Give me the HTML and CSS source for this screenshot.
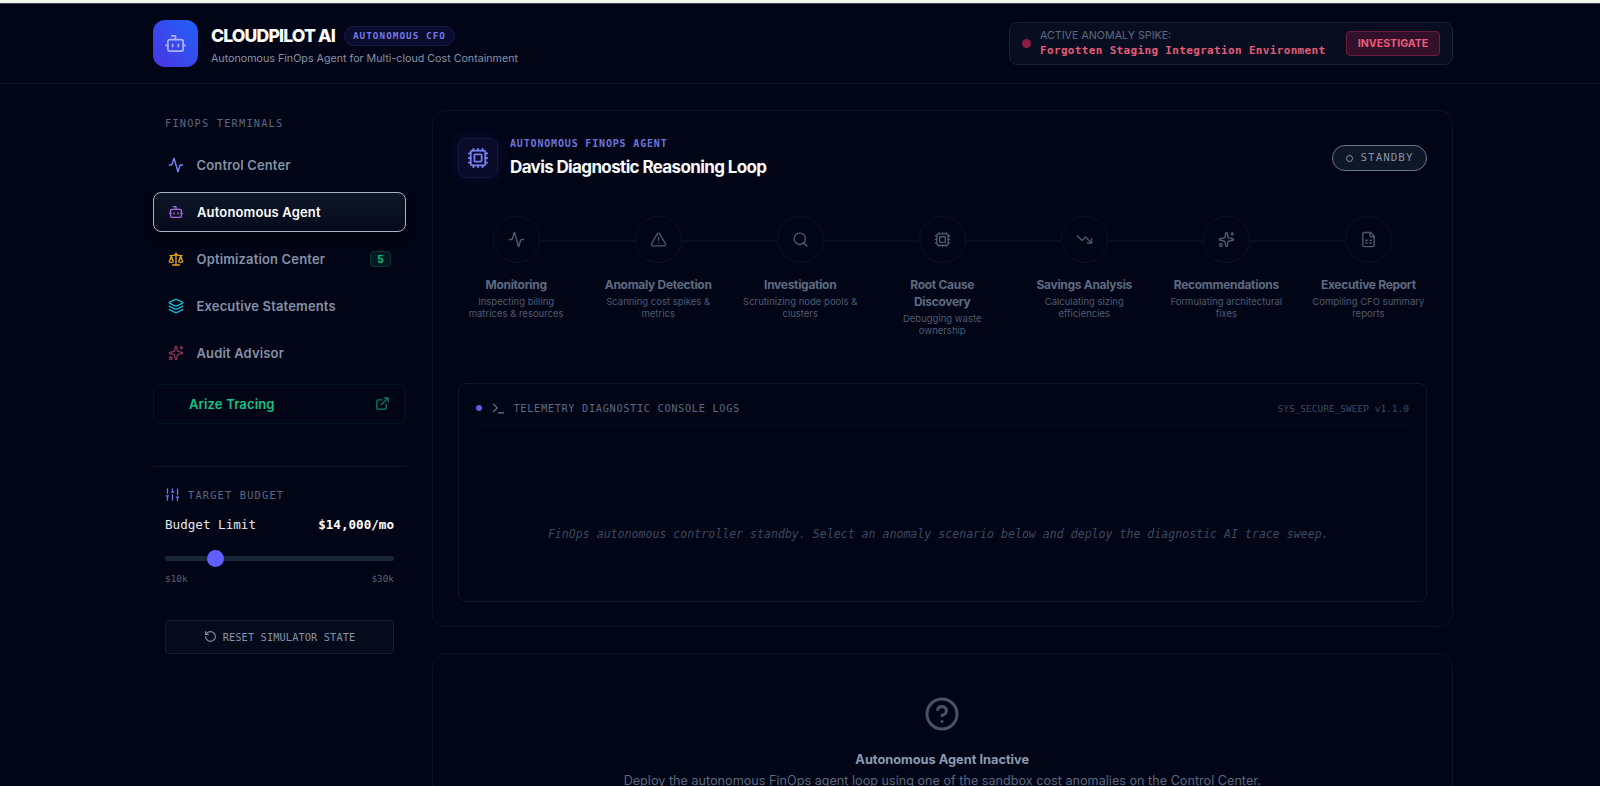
FILE: index.html
```html
<!DOCTYPE html>
<html lang="en">
<head>
    <meta charset="UTF-8">
    <meta name="viewport" content="width=device-width">
    <title>CloudPilot AI</title>
    <link rel="stylesheet" href="styles.css">
</head>

<body>
    <!-- shared icon shapes -->
    <svg class="sprite" width="0" height="0">
        <symbol id="bot" viewBox="0 0 24 24"><path d="M12 8V4H8"/><rect width="16" height="12" x="4" y="8" rx="2"/><path d="M2 14h2M20 14h2M15 13v2M9 13v2"/></symbol>
        <symbol id="activity" viewBox="0 0 24 24"><path d="M22 12h-2.48a2 2 0 0 0-1.93 1.46l-2.35 8.36a.25.25 0 0 1-.48 0L9.24 2.18a.25.25 0 0 0-.48 0l-2.35 8.36A2 2 0 0 1 4.49 12H2"/></symbol>
        <symbol id="scale" viewBox="0 0 24 24"><path d="m16 16 3-8 3 8c-.87.65-1.92 1-3 1s-2.13-.35-3-1Z"/><path d="m2 16 3-8 3 8c-.87.65-1.92 1-3 1s-2.13-.35-3-1Z"/><path d="M7 21h10M12 3v18M3 7h2c2 0 5-1 7-2 2 1 5 2 7 2h2"/></symbol>
        <symbol id="layers" viewBox="0 0 24 24"><path d="M12.83 2.18a2 2 0 0 0-1.66 0L2.6 6.08a1 1 0 0 0 0 1.83l8.58 3.91a2 2 0 0 0 1.66 0l8.58-3.9a1 1 0 0 0 0-1.83z"/><path d="M2 12a1 1 0 0 0 .58.91l8.6 3.91a2 2 0 0 0 1.65 0l8.58-3.9A1 1 0 0 0 22 12"/><path d="M2 17a1 1 0 0 0 .58.91l8.6 3.91a2 2 0 0 0 1.65 0l8.58-3.9A1 1 0 0 0 22 17"/></symbol>
        <symbol id="sparkles" viewBox="0 0 24 24"><path d="M11.017 2.814a1 1 0 0 1 1.966 0l1.051 5.558a2 2 0 0 0 1.594 1.594l5.558 1.051a1 1 0 0 1 0 1.966l-5.558 1.051a2 2 0 0 0-1.594 1.594l-1.051 5.558a1 1 0 0 1-1.966 0l-1.051-5.558a2 2 0 0 0-1.594-1.594l-5.558-1.051a1 1 0 0 1 0-1.966l5.558-1.051a2 2 0 0 0 1.594-1.594z"/><path d="M20 2v4M22 4h-4"/><circle cx="4" cy="20" r="2"/></symbol>
        <symbol id="external" viewBox="0 0 24 24"><path d="M15 3h6v6M10 14 21 3M18 13v6a2 2 0 0 1-2 2H5a2 2 0 0 1-2-2V8a2 2 0 0 1 2-2h6"/></symbol>
        <symbol id="sliders" viewBox="0 0 24 24"><path d="M4 21v-7M4 10V3M12 21v-9M12 8V3M20 21v-5M20 12V3M2 14h4M10 8h4M18 16h4"/></symbol>
        <symbol id="reset" viewBox="0 0 24 24"><path d="M3 12a9 9 0 1 0 9-9 9.75 9.75 0 0 0-6.74 2.74L3 8"/><path d="M3 3v5h5"/></symbol>
        <symbol id="cpu" viewBox="0 0 24 24"><path d="M12 20v2M12 2v2M17 20v2M17 2v2M2 12h2M2 17h2M2 7h2M20 12h2M20 17h2M20 7h2M7 20v2M7 2v2"/><rect x="4" y="4" width="16" height="16" rx="2"/><rect x="8" y="8" width="8" height="8" rx="1"/></symbol>
        <symbol id="alert" viewBox="0 0 24 24"><path d="m21.73 18-8-14a2 2 0 0 0-3.48 0l-8 14A2 2 0 0 0 4 21h16a2 2 0 0 0 1.73-3M12 9v4M12 17h.01"/></symbol>
        <symbol id="search" viewBox="0 0 24 24"><circle cx="11" cy="11" r="8"/><path d="m21 21-4.34-4.34"/></symbol>
        <symbol id="trending" viewBox="0 0 24 24"><path d="M16 17h6v-6"/><path d="m22 17-8.5-8.5-5 5L2 7"/></symbol>
        <symbol id="report" viewBox="0 0 24 24"><path d="M15 2H6a2 2 0 0 0-2 2v16a2 2 0 0 0 2 2h12a2 2 0 0 0 2-2V7Z"/><path d="M14 2v4a2 2 0 0 0 2 2h4M8 13h2M14 13h2M8 17h2M14 17h2"/></symbol>
        <symbol id="terminal" viewBox="0 0 24 24"><path d="M12 19h8M4 17l6-6-6-6"/></symbol>
        <symbol id="help" viewBox="0 0 24 24"><circle cx="12" cy="12" r="10"/><path d="M9.09 9a3 3 0 0 1 5.83 1c0 2-3 3-3 3M12 17h.01"/></symbol>
    </svg>

    <header class="header">
        <div class="header-inner">
            <div class="brand">
                <div class="logo"><svg class="icon"><use href="#bot"/></svg></div>
                <div>
                    <div class="brand-row">
                        <h1>CLOUDPILOT AI</h1>
                        <span class="brand-badge">AUTONOMOUS CFO</span>
                    </div>
                    <p class="tagline">Autonomous FinOps Agent for Multi-cloud Cost Containment</p>
                </div>
            </div>
            <div class="anomaly">
                <span class="anomaly-dot"></span>
                <div class="anomaly-text">
                    <div class="anomaly-label">ACTIVE ANOMALY SPIKE:</div>
                    <div class="anomaly-name">Forgotten Staging Integration Environment</div>
                </div>
                <button class="investigate">INVESTIGATE</button>
            </div>
        </div>
    </header>

    <div class="layout">
        <aside class="sidebar">
            <div class="side-title">FINOPS TERMINALS</div>
            <nav class="nav">
                <a class="nav-item"><svg class="icon indigo"><use href="#activity"/></svg>Control Center</a>
                <a class="nav-item active"><svg class="icon purple"><use href="#bot"/></svg>Autonomous Agent</a>
                <a class="nav-item"><svg class="icon amber"><use href="#scale"/></svg>Optimization Center<span class="count">5</span></a>
                <a class="nav-item"><svg class="icon cyan"><use href="#layers"/></svg>Executive Statements</a>
                <a class="nav-item"><svg class="icon rose"><use href="#sparkles"/></svg>Audit Advisor</a>
                <a class="nav-item tracing">Arize Tracing<svg class="icon"><use href="#external"/></svg></a>
            </nav>
            <div class="budget">
                <div class="budget-title"><svg class="icon"><use href="#sliders"/></svg>TARGET BUDGET</div>
                <div class="budget-row"><span>Budget Limit</span><b>$14,000/mo</b></div>
                <div class="slider"><span class="thumb"></span></div>
                <div class="range"><span>$10k</span><span>$30k</span></div>
                <button class="reset"><svg class="icon"><use href="#reset"/></svg><span>RESET SIMULATOR STATE</span></button>
            </div>
        </aside>

        <main class="main">
            <section class="card agent">
                <div class="agent-head">
                    <div class="agent-icon"><svg class="icon"><use href="#cpu"/></svg></div>
                    <div>
                        <div class="eyebrow">AUTONOMOUS FINOPS AGENT</div>
                        <h2>Davis Diagnostic Reasoning Loop</h2>
                    </div>
                    <div class="status"><span class="ring"></span><span>STANDBY</span></div>
                </div>

                <div class="steps">
                    <div class="step"><div class="circle"><svg class="icon"><use href="#activity"/></svg></div><h3>Monitoring</h3><p>Inspecting billing<br>matrices &amp; resources</p></div>
                    <div class="step"><div class="circle"><svg class="icon"><use href="#alert"/></svg></div><h3>Anomaly Detection</h3><p>Scanning cost spikes &amp; metrics</p></div>
                    <div class="step"><div class="circle"><svg class="icon"><use href="#search"/></svg></div><h3>Investigation</h3><p>Scrutinizing node pools &amp; clusters</p></div>
                    <div class="step"><div class="circle"><svg class="icon"><use href="#cpu"/></svg></div><h3>Root Cause<br>Discovery</h3><p>Debugging waste ownership</p></div>
                    <div class="step"><div class="circle"><svg class="icon"><use href="#trending"/></svg></div><h3>Savings Analysis</h3><p>Calculating sizing efficiencies</p></div>
                    <div class="step"><div class="circle"><svg class="icon"><use href="#sparkles"/></svg></div><h3>Recommendations</h3><p>Formulating architectural fixes</p></div>
                    <div class="step"><div class="circle"><svg class="icon"><use href="#report"/></svg></div><h3>Executive Report</h3><p>Compiling CFO summary reports</p></div>
                </div>

                <div class="console">
                    <div class="console-head">
                        <span class="console-dot"></span>
                        <svg class="icon"><use href="#terminal"/></svg>
                        <span class="console-title">TELEMETRY DIAGNOSTIC CONSOLE LOGS</span>
                        <span class="version">SYS_SECURE_SWEEP v1.1.0</span>
                    </div>
                    <div class="console-body"><span>FinOps autonomous controller standby. Select an anomaly scenario below and deploy the diagnostic AI trace sweep.</span></div>
                </div>
            </section>

            <section class="card inactive">
                <svg class="icon"><use href="#help"/></svg>
                <h3>Autonomous Agent Inactive</h3>
                <p>Deploy the autonomous FinOps agent loop using one of the sandbox cost anomalies on the Control Center.</p>
            </section>
        </main>
    </div>
</body>
</html>
```
FILE: styles.css
```css
* {
    box-sizing: border-box;
}

body {
    margin: 0;
    height: 786px;
    overflow: hidden;
    background-color: #020515;
    border-top: 3px solid #f1f5ea;
    color: #f1f5f9;
    font-family: Inter, sans-serif;
}

h1, h2, h3, p {
    margin: 0;
}

button {
    font-family: inherit;
}

.sprite {
    position: absolute;
}

.icon {
    width: 16px;
    height: 16px;
    flex: none;
    fill: none;
    stroke: currentColor;
    stroke-width: 2;
    stroke-linecap: round;
    stroke-linejoin: round;
}

/* header */
.header {
    height: 81px;
    border-top: 1px solid #3c4150;
    border-bottom: 1px solid #0a1020;
}

.header-inner {
    display: flex;
    justify-content: space-between;
    width: 1300px;
    margin-left: 153px;
}

.brand {
    display: flex;
    padding-top: 16px;
    gap: 13px;
}

.logo {
    display: flex;
    align-items: center;
    justify-content: center;
    width: 45px;
    height: 47px;
    border-radius: 12px;
    background: linear-gradient(to top right, #4a35e0, #2160fa);
    color: #b0b0f8;
}

.logo .icon {
    width: 23px;
    height: 23px;
    stroke-width: 1.8;
}

.brand-row {
    display: flex;
    align-items: center;
    height: 20px;
    margin-top: 6px;
    gap: 9px;
}

h1 {
    font-size: 17.6px;
    font-weight: 800;
    line-height: 20px;
    letter-spacing: -0.85px;
    color: #fff;
}

.brand-badge {
    padding: 0 8px;
    height: 20px;
    line-height: 18px;
    border: 1px solid #1b1b4b;
    border-radius: 10px;
    background-color: #0b0c2c;
    color: #7279e6;
    font-family: "DejaVu Sans Mono", monospace;
    font-size: 9.3px;
    font-weight: bold;
    letter-spacing: 1.05px;
}

.tagline {
    margin-top: 5px;
    font-size: 10.7px;
    line-height: 15px;
    letter-spacing: 0;
    color: #8593a8;
}

.anomaly {
    display: flex;
    align-items: center;
    width: 444px;
    height: 43px;
    margin-top: 18px;
    padding: 0 12px;
    border: 1px solid #172334;
    border-radius: 8px;
    background-color: #080e20;
}

.anomaly-dot {
    width: 9px;
    height: 9px;
    border-radius: 50%;
    background-color: #8c1d44;
}

.anomaly-text {
    margin-left: 9px;
    padding-bottom: 1px;
}

.anomaly-label {
    font-size: 10.7px;
    line-height: 14px;
    color: #5b6a80;
}

.anomaly-name {
    font-family: "DejaVu Sans Mono", monospace;
    font-size: 11px;
    font-weight: bold;
    line-height: 15px;
    letter-spacing: 0.34px;
    color: #e65b78;
}

.investigate {
    width: 94px;
    height: 25px;
    margin-left: auto;
    padding: 0;
    border: 1px solid #6d1c3c;
    border-radius: 4px;
    background-color: #33102a;
    color: #ea5c79;
    font-size: 10.6px;
    font-weight: 700;
}

/* columns */
.layout {
    display: flex;
    align-items: flex-start;
    gap: 25.5px;
    padding: 26px 0 0 153px;
}

.sidebar {
    width: 253px;
}

.side-title {
    padding: 5px 12px 0;
    font-family: "DejaVu Sans Mono", monospace;
    font-size: 10.3px;
    line-height: 16px;
    letter-spacing: 1.2px;
    color: #5b6980;
}

.nav {
    display: flex;
    flex-direction: column;
    gap: 6.9px;
    margin-top: 14px;
}

.nav-item {
    display: flex;
    align-items: center;
    height: 40px;
    padding: 0 15px 0 14.5px;
    gap: 13px;
    font-size: 13px;
    font-weight: 600;
    letter-spacing: 0.15px;
    color: #8391a7;
}

.nav-item.active {
    padding-left: 14px;
    border: 1px solid #aeb2bd;
    border-radius: 8px;
    background: linear-gradient(#0d1628, #060b1c);
    box-shadow: 0 6px 10px #01030c;
    color: #fff;
}

.indigo { color: #7c86ff; }
.purple { color: #a66be0; }
.amber { color: #e6a817; }
.cyan { color: #16b5d2; }
.rose { color: #8f3450; }

.count {
    width: 21px;
    height: 16px;
    margin-left: auto;
    border: 1px solid #06362f;
    border-radius: 4px;
    background-color: #031b20;
    color: #05c681;
    font-size: 10px;
    font-weight: 700;
    line-height: 14px;
    text-align: center;
}

.nav-item.tracing {
    justify-content: space-between;
    margin-top: 4.5px;
    padding: 0 15px 0 35px;
    border: 1px solid #041620;
    border-radius: 8px;
    color: #15c286;
}

.tracing .icon {
    width: 15px;
    height: 15px;
    color: #0c8466;
}

.budget {
    margin-top: 42px;
    padding: 19px 12px 0;
    border-top: 1px solid #0e1526;
}

.budget-title {
    display: flex;
    align-items: center;
    gap: 8px;
    height: 18px;
    font-family: "DejaVu Sans Mono", monospace;
    font-size: 10.3px;
    letter-spacing: 1.2px;
    color: #5b6980;
}

.budget-title .icon {
    width: 15px;
    height: 15px;
    color: #7079e8;
}

.budget-row {
    display: flex;
    justify-content: space-between;
    margin-top: 12px;
    font-family: "DejaVu Sans Mono", monospace;
    font-size: 12.6px;
    line-height: 18px;
    color: #e2e8f0;
}

.budget-row b {
    color: #fff;
}

.slider {
    position: relative;
    height: 5px;
    margin-top: 22px;
    border-radius: 3px;
    background-color: #1b2639;
}

.thumb {
    position: absolute;
    left: 42px;
    top: -6px;
    width: 17px;
    height: 17px;
    border-radius: 50%;
    background-color: #605fff;
}

.range {
    display: flex;
    justify-content: space-between;
    margin-top: 11px;
    font-family: "DejaVu Sans Mono", monospace;
    font-size: 9.4px;
    line-height: 14px;
    color: #536177;
}

.reset {
    display: flex;
    align-items: center;
    justify-content: center;
    gap: 6px;
    width: 100%;
    height: 34px;
    margin-top: 34px;
    border: 1px solid #151e2f;
    border-radius: 4px;
    background-color: #050b1b;
    color: #8592a7;
    font-family: "DejaVu Sans Mono", monospace;
    font-size: 10.3px;
    letter-spacing: 0.12px;
}

.reset .icon {
    width: 13px;
    height: 13px;
}

/* main cards */
.main {
    width: 1021.5px;
}

.card {
    border: 1px solid #0a1122;
    border-radius: 14px;
}

.agent {
    height: 517px;
    padding: 26px 25px 0;
    border-top-color: #0c1428;
}

.agent-head {
    display: flex;
    align-items: center;
    height: 41px;
}

.agent-icon {
    display: flex;
    align-items: center;
    justify-content: center;
    width: 40px;
    height: 40px;
    margin-right: 12.5px;
    border: 1px solid #161742;
    border-radius: 8px;
    background-color: #0a0b2a;
    box-shadow: 0 0 15px rgba(79, 70, 229, 0.18);
    color: #7780ee;
}

.agent-icon .icon {
    width: 22px;
    height: 22px;
}

.eyebrow {
    margin-top: 1px;
    font-family: "DejaVu Sans Mono", monospace;
    font-size: 10px;
    font-weight: bold;
    line-height: 14px;
    letter-spacing: 0.83px;
    color: #6c74df;
}

h2 {
    margin-top: 4px;
    font-size: 17px;
    font-weight: 700;
    line-height: 24px;
    letter-spacing: -0.63px;
    color: #f8fafc;
}

.status {
    display: flex;
    align-items: center;
    justify-content: center;
    gap: 8px;
    width: 95px;
    height: 26px;
    margin-left: auto;
    border: 1px solid #6b7688;
    border-radius: 13px;
    background-color: #0d1728;
    color: #8592a7;
    font-family: "DejaVu Sans Mono", monospace;
    font-size: 10.9px;
    letter-spacing: 1px;
}

.ring {
    width: 7px;
    height: 7px;
    margin-top: 2px;
    border: 1.4px solid #8592a7;
    border-radius: 50%;
}

.steps {
    display: grid;
    grid-template-columns: repeat(7, 1fr);
    gap: 24.7px;
    height: 167px;
    margin-top: 38px;
    text-align: center;
}

.step {
    position: relative;
}

/* connector to the next step */
.step:not(:last-child)::after {
    content: "";
    position: absolute;
    left: calc(50% + 23px);
    top: 24px;
    width: 96px;
    height: 2px;
    background-color: #080f1f;
}

.circle {
    display: flex;
    align-items: center;
    justify-content: center;
    width: 47px;
    height: 47px;
    margin: 0 auto 13px;
    border: 1px solid #0b1223;
    border-radius: 50%;
    color: #4b586e;
}

.step .icon {
    width: 17px;
    height: 17px;
}

.step h3 {
    font-size: 12px;
    font-weight: 700;
    line-height: 17px;
    letter-spacing: -0.3px;
    white-space: nowrap;
    color: #5d6b82;
}

.step p {
    margin: 3px -4px 0;
    padding: 0 2px;
    font-size: 9.5px;
    line-height: 12px;
    color: #4e5b72;
}

.console {
    height: 219px;
    padding: 0 17px;
    border: 1px solid #0f1624;
    border-radius: 8px;
}

.console-head {
    display: flex;
    align-items: center;
    height: 42px;
    padding-top: 7px;
    border-bottom: 1px solid #060b1a;
    font-family: "DejaVu Sans Mono", monospace;
}

.console-dot {
    width: 6px;
    height: 6px;
    border-radius: 50%;
    background-color: #5d5bec;
}

.console-head .icon {
    width: 15px;
    height: 15px;
    margin-left: 9px;
    color: #6a788e;
}

.console-title {
    margin-left: 8px;
    font-size: 10.3px;
    letter-spacing: 0.66px;
    color: #5b6980;
}

.version {
    margin-left: auto;
    font-size: 9.5px;
    color: #3d4a61;
}

.console-body {
    display: flex;
    align-items: center;
    justify-content: center;
    height: 175px;
    padding: 41px 8px 0 0;
    font-family: "DejaVu Sans Mono", monospace;
    font-size: 11.58px;
    font-style: italic;
    white-space: nowrap;
    color: #3d4a60;
}

.inactive {
    display: flex;
    flex-direction: column;
    align-items: center;
    height: 200px;
    margin-top: 26px;
    padding-top: 42px;
}

.inactive .icon {
    width: 36px;
    height: 36px;
    color: #465368;
}

.inactive h3 {
    margin-top: 19px;
    font-size: 12.8px;
    line-height: 18px;
    font-weight: 700;
    color: #8b9ab0;
}

.inactive p {
    margin-top: 3px;
    font-size: 12.65px;
    line-height: 18px;
    white-space: nowrap;
    color: #5b6980;
}
```
